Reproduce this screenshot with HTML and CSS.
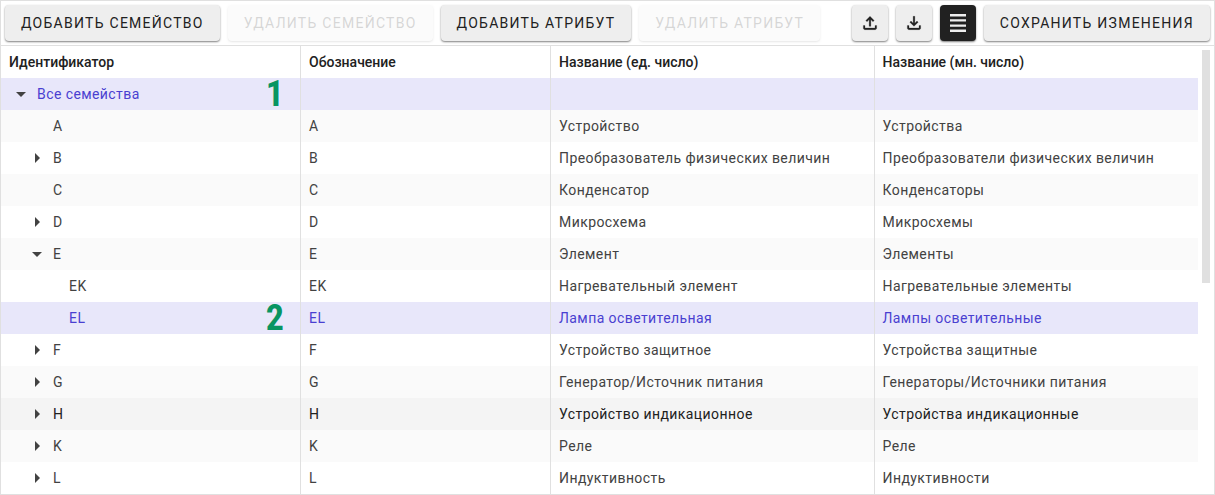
FILE: index.html
```html
<!DOCTYPE html>
<html lang="ru">
<head>
<meta charset="utf-8">
<title>Семейства</title>
<link rel="stylesheet" href="styles.css">
</head>
<body>
<main class="panel">
  <div class="toolbar">
    <button class="btn" type="button">Добавить семейство</button>
    <button class="btn" type="button" disabled>Удалить семейство</button>
    <button class="btn" type="button">Добавить атрибут</button>
    <button class="btn" type="button" disabled>Удалить атрибут</button>
    <span class="spacer"></span>
    <button class="btn btn-icon" type="button" aria-label="Выгрузить">
      <svg class="icon" viewBox="0 0 24 24"><path d="M18 15v3H6v-3H4v3c0 1.1.9 2 2 2h12c1.1 0 2-.9 2-2v-3zM7 9l1.41 1.41L11 7.83V16h2V7.83l2.59 2.58L17 9l-5-5z"/></svg>
    </button>
    <button class="btn btn-icon" type="button" aria-label="Загрузить">
      <svg class="icon" viewBox="0 0 24 24"><path d="M18 15v3H6v-3H4v3c0 1.1.9 2 2 2h12c1.1 0 2-.9 2-2v-3zM17 11l-1.41-1.41L13 12.17V4h-2v8.17L8.41 9.59 7 11l5 5z"/></svg>
    </button>
    <button class="btn btn-icon btn-active" type="button" aria-label="Плотный список" aria-pressed="true">
      <svg class="icon-lines" viewBox="0 0 16 18"><path d="M0 0h16v2.4H0zM0 5.2h16v2.4H0zM0 10.4h16v2.4H0zM0 15.6h16V18H0z"/></svg>
    </button>
    <button class="btn" type="button">Сохранить изменения</button>
  </div>
  <div class="content">
    <table class="tree">
      <colgroup><col class="col-id"><col class="col-code"><col><col></colgroup>
      <thead>
        <tr><th>Идентификатор</th><th>Обозначение</th><th>Название (ед. число)</th><th>Название (мн. число)</th></tr>
      </thead>
      <tbody>
        <tr class="selected"><td><div class="node"><button class="toggle open" type="button" aria-label="Свернуть"></button>Все семейства<span class="mark">1</span></div></td><td></td><td></td><td></td></tr>
        <tr><td><div class="node level-1 leaf">A</div></td><td>A</td><td>Устройство</td><td>Устройства</td></tr>
        <tr><td><div class="node level-1"><button class="toggle" type="button" aria-label="Развернуть"></button>B</div></td><td>B</td><td>Преобразователь физических величин</td><td>Преобразователи физических величин</td></tr>
        <tr><td><div class="node level-1 leaf">C</div></td><td>C</td><td>Конденсатор</td><td>Конденсаторы</td></tr>
        <tr><td><div class="node level-1"><button class="toggle" type="button" aria-label="Развернуть"></button>D</div></td><td>D</td><td>Микросхема</td><td>Микросхемы</td></tr>
        <tr><td><div class="node level-1"><button class="toggle open" type="button" aria-label="Свернуть"></button>E</div></td><td>E</td><td>Элемент</td><td>Элементы</td></tr>
        <tr><td><div class="node level-2 leaf">EK</div></td><td>EK</td><td>Нагревательный элемент</td><td>Нагревательные элементы</td></tr>
        <tr class="selected"><td><div class="node level-2 leaf">EL<span class="mark">2</span></div></td><td>EL</td><td>Лампа осветительная</td><td>Лампы осветительные</td></tr>
        <tr><td><div class="node level-1"><button class="toggle" type="button" aria-label="Развернуть"></button>F</div></td><td>F</td><td>Устройство защитное</td><td>Устройства защитные</td></tr>
        <tr><td><div class="node level-1"><button class="toggle" type="button" aria-label="Развернуть"></button>G</div></td><td>G</td><td>Генератор/Источник питания</td><td>Генераторы/Источники питания</td></tr>
        <tr class="hovered"><td><div class="node level-1"><button class="toggle" type="button" aria-label="Развернуть"></button>H</div></td><td>H</td><td>Устройство индикационное</td><td>Устройства индикационные</td></tr>
        <tr><td><div class="node level-1"><button class="toggle" type="button" aria-label="Развернуть"></button>K</div></td><td>K</td><td>Реле</td><td>Реле</td></tr>
        <tr><td><div class="node level-1"><button class="toggle" type="button" aria-label="Развернуть"></button>L</div></td><td>L</td><td>Индуктивность</td><td>Индуктивности</td></tr>
      </tbody>
    </table>
    <div class="scroll-track"><div class="scroll-thumb"></div></div>
  </div>
</main>
</body>
</html>
```
FILE: styles.css
```css
* {
  box-sizing: border-box;
}

body {
  margin: 0;
  background: #fff;
  color: #424242;
  font: 14px/20px Roboto, sans-serif;
}

.panel {
  border: 1px solid #e0e0e0;
}

.toolbar {
  display: flex;
  align-items: center;
  gap: 8px;
  padding: 4px;
  border-bottom: 1px solid #e0e0e0;
}

.spacer {
  flex: 1;
}

.btn {
  height: 36px;
  padding: 0 16px;
  border: 0;
  border-radius: 4px;
  background: #eee;
  box-shadow: 0 1px 2px rgba(0, 0, 0, 0.5);
  color: #212121;
  font: 14px/20px Roboto, sans-serif;
  letter-spacing: 0.09em;
  text-transform: uppercase;
  white-space: nowrap;
}

.btn:disabled {
  opacity: 0.18;
}

.btn-icon {
  display: flex;
  align-items: center;
  justify-content: center;
  width: 36px;
  padding: 0;
}

.btn-active {
  background: #212121;
  color: #eee;
}

.icon {
  width: 20px;
  height: 20px;
  fill: currentColor;
  stroke: currentColor;
  stroke-width: 0.3;
}

.icon-lines {
  width: 16px;
  height: 18px;
  fill: currentColor;
}

.content {
  display: flex;
}

.tree {
  flex: 1;
  width: 100%;
  table-layout: fixed;
  border-collapse: separate;
  border-spacing: 0;
}

.col-id {
  width: 300px;
}

.col-code {
  width: 250px;
}

.tree th,
.tree td {
  height: 32px;
  padding: 0 8px;
  border-right: 1px solid #e0e0e0;
  text-align: left;
  white-space: nowrap;
}

.tree th:last-child,
.tree td:last-child {
  border-right: 0;
}

.tree th {
  color: #212121;
  font-weight: 500;
}

.tree td {
  letter-spacing: 0.03em;
}

.tree tbody tr:nth-child(even) {
  background: #fafafa;
}

.tree tbody .selected,
.tree tbody .selected:nth-child(even) {
  background: #e8e7fa;
  color: #4a3fd1;
}

.tree tbody .hovered {
  background: #f4f4f4;
  color: #212121;
}

.node {
  display: flex;
  align-items: center;
  height: 32px;
}

.level-1 {
  padding-left: 16px;
}

.level-2 {
  padding-left: 32px;
}

.leaf::before {
  content: "";
  width: 28px;
}

.toggle {
  display: flex;
  align-items: center;
  justify-content: center;
  width: 24px;
  height: 24px;
  margin-right: 4px;
  padding: 0;
  border: 0;
  background: none;
}

.toggle::before {
  content: "";
  border: 5px solid transparent;
  border-right-width: 0;
  border-left-color: #424242;
}

.toggle.open::before {
  border: 5px solid transparent;
  border-bottom-width: 0;
  border-top-color: #424242;
}

.mark {
  margin-left: auto;
  padding-right: 8px;
  color: #089562;
  font: bold 36px/32px "Roboto Condensed", Roboto, sans-serif;
  letter-spacing: 0;
}

.scroll-track {
  width: 16px;
  padding: 4px;
}

.scroll-thumb {
  height: 53%;
  background: #e0e0e0;
}
```
